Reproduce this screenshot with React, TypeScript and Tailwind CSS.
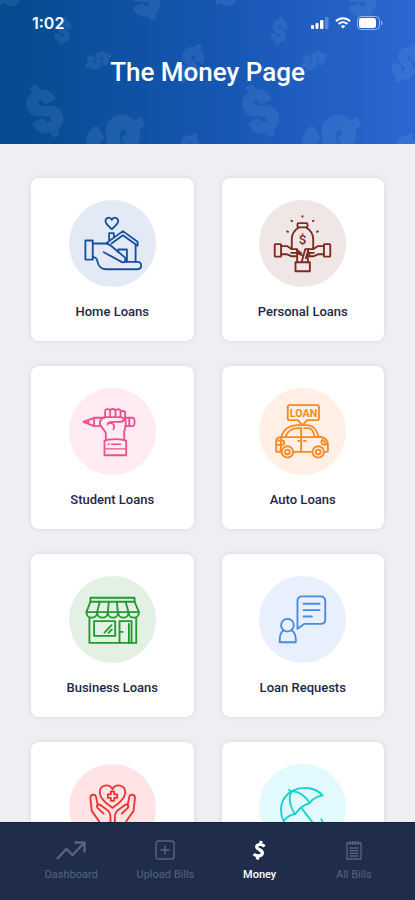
import type { ReactNode } from "react"

type Loan = {
  label: string
  circle: string
  color: string
  viewBox: string
  icon: ReactNode
}

const loans: Loan[] = [
  {
    label: "Home Loans",
    circle: "bg-[#e4eaf5]",
    color: "text-[#17509f]",
    viewBox: "27 30 260 260",
    icon: (
      <>
        <path d="M155 117c-9-8-19-15-19-24 0-11 14-14 19-4 5-10 19-7 19 4 0 9-10 16-19 24z" />
        <path d="M147 148v-19h14v9" />
        <path d="M140 158l48-35 44 32v12l-44-32-34 25" />
        <path d="M226 166v49M174 186v-8h26v37" />
        <rect x="76" y="151" width="22" height="57" />
        <path d="M98 160h39c8 0 12 5 18 9l37 31c8 8 2 20-8 15l-53-29" />
        <path d="M98 200c12 2 12 6 14 14 3 14 12 23 28 23h92c14 0 14-22 0-22h-36" />
      </>
    ),
  },
  {
    label: "Personal Loans",
    circle: "bg-[#efe6e5]",
    color: "text-[#7d2b20]",
    viewBox: "30 30 260 260",
    icon: (
      <>
        <rect x="145" y="99" width="30" height="13" rx="3" />
        <path d="M149 112c-14 8-21 20-21 36v28M171 112c14 8 21 20 21 36v28" />
        <path d="M160 78v2M127 92l2 1M193 92l-2 1M114 124l3 1M206 124l-3 1" />
        <text x="160" y="163" textAnchor="middle" fontSize="40" fontWeight="500" fill="currentColor" stroke="none">
          $
        </text>
        <rect x="77" y="162" width="19" height="37" rx="2" />
        <rect x="224" y="162" width="19" height="37" rx="2" />
        <path d="M96 168h19l13 9h16v11h-18M96 192h16l14 6h16M224 168h-19l-13 9h-15v11h17M224 192h-16l-14 6h-14" />
        <rect x="139" y="216" width="43" height="27" />
        <path d="M144 216v-28l16 8M176 216v-18l6-8M158 214l10-37h10l-8 27M144 180l12 9" />
      </>
    ),
  },
  {
    label: "Student Loans",
    circle: "bg-[#ffebf2]",
    color: "text-[#ee4f88]",
    viewBox: "27 25 260 260",
    icon: (
      <>
        <path d="M133 114h-31l-32 12 32 13h18M102 114v25M85 121v10" />
        <path d="M135 112V95c0-9 15-9 15 0v17M150 94c1-9 16-8 16 1v17M166 94c2-8 15-7 15 1v17M181 98c3-7 14-5 14 2v16" />
        <path d="M195 114h22c8 0 8 25 0 25h-22M207 114v25" />
        <path d="M135 112h47c11 0 11 14 0 14h-26c-6 0-14 4-14 8M135 112c-14 3-17 12-15 23l17 24v19M195 116c3 14 3 25-3 37v25" />
        <path d="M150 129c12 1 14 12 10 19" />
        <path d="M133 183c14-7 51-7 65 0v43h-65z" />
        <path d="M134 207h62M144 193h3M154 193h27" strokeWidth="4" />
      </>
    ),
  },
  {
    label: "Auto Loans",
    circle: "bg-[#ffefe5]",
    color: "text-[#f58a22]",
    viewBox: "31 25 260 260",
    icon: (
      <>
        <path d="M122 76h83c4 0 5 2 5 5v35c0 4-2 5-5 5h-30l-14 16-14-16h-25c-4 0-5-2-5-5V81c0-3 1-5 5-5z" />
        <text x="164" y="112" textAnchor="middle" fontSize="32" fontWeight="700" fill="currentColor" stroke="none">
          LOAN
        </text>
        <path d="M97 172c7-22 24-36 51-36h27c18 0 29 16 34 34 16 2 28 8 28 24v18c0 3-2 4-5 4h-7M189 216h-53M96 216h-9c-4 0-5-2-5-6v-25c0-8 6-13 15-13z" />
        <path d="M97 172h112M110 170c7-16 20-25 37-25h10v68M166 145h11c10 0 17 10 20 24M148 183h6M165 183h6" />
        <circle cx="116" cy="216" r="17" />
        <circle cx="116" cy="216" r="7" />
        <circle cx="208" cy="216" r="17" />
        <circle cx="208" cy="216" r="7" />
        <path d="M88 182h12c8 0 8 13 0 13H84M220 180c7 3 10 7 12 14h-9c-7-3-7-9-3-14" />
      </>
    ),
  },
  {
    label: "Business Loans",
    circle: "bg-[#e3f1e5]",
    color: "text-[#229a2e]",
    viewBox: "27 20 260 260",
    icon: (
      <>
        <rect x="91" y="85" width="132" height="12" />
        <path d="M91 97L79 128h157l-13-31M119 97l-8 31M146 97l-3 31M170 97l3 31M196 97l9 31" />
        <path d="M79 128c0 22 32 22 32 0 0 22 32 22 32 0 0 22 31 22 31 0 0 22 31 22 31 0 0 22 31 22 31 0" />
        <path d="M88 145v75h140v-75" />
        <rect x="102" y="155" width="63" height="44" />
        <path d="M178 220v-65h36v65M206 220v-57M180 187h7" />
        <path d="M133 189l21-22M145 190l10-10" />
      </>
    ),
  },
  {
    label: "Loan Requests",
    circle: "bg-[#e8effd]",
    color: "text-[#478bdc]",
    viewBox: "30 20 260 260",
    icon: (
      <>
        <path d="M145 178V95c0-9 5-14 14-14h55c9 0 14 5 14 14v54c0 9-5 14-14 14h-48z" />
        <path d="M163 103h48M163 122h48M163 141h25" />
        <circle cx="115" cy="167" r="19" />
        <path d="M103 183c-9 5-12 17-11 35h48c1-18-3-30-12-35" />
      </>
    ),
  },
  {
    label: "Health Insurance",
    circle: "bg-[#ffe3e5]",
    color: "text-[#ea3432]",
    viewBox: "147 105 260 260",
    icon: (
      <>
        <path d="M277 236c-19-14-38-28-38-47 0-22 28-27 38-9 10-18 38-13 38 9 0 19-19 33-38 47z" />
        <path d="M272 187h10v9h9v10h-9v9h-10v-9h-9v-10h9z" />
        <path d="M271 290v-27c0-12-4-17-12-22l-17-13c-9-5-15 2-9 9l17 16M233 229l-5-25c-3-12-18-8-17 3l4 38 22 31v14" />
        <path d="M284 290v-27c0-12 4-17 12-22l17-13c9-5 15 2 9 9l-17 16M322 229l5-25c3-12 18-8 17 3l-4 38-22 31v14" />
      </>
    ),
  },
  {
    label: "Insurance",
    circle: "bg-[#e2f9fd]",
    color: "text-[#17d0cf]",
    viewBox: "150 105 260 260",
    icon: (
      <>
        <path d="M240 182l6 8M224 277c-17-36-7-73 24-91 34-18 73-9 92 13-14 2-29 9-39 23-16 5-32 16-43 33-17 2-28 11-34 22z" />
        <path d="M247 187c-10 20-4 49 11 68M247 187c20-2 42 13 54 35" />
        <path d="M278 238l36 47c9 12 36 8 27-5l-5-10" />
      </>
    ),
  },
]

const tabs = [
  {
    label: "Dashboard",
    icon: (
      <svg viewBox="0 0 30 20" className="h-5 w-[30px]" fill="none" stroke="currentColor" strokeWidth="2.4">
        <path d="M1 19l9.500-10 6 6L28 3M18.500 2.500h10v10" />
      </svg>
    ),
  },
  {
    label: "Upload Bills",
    icon: (
      <svg viewBox="0 0 20 20" className="size-5" fill="none" stroke="currentColor" strokeWidth="1.400">
        <rect x="1" y="1" width="18" height="18" rx="2.500" />
        <path d="M10 5.500v9M5.500 10h9" />
      </svg>
    ),
  },
  {
    label: "Money",
    active: true,
    icon: (
      <svg viewBox="0 0 20 20" className="size-5" fill="none" stroke="currentColor" strokeWidth="3.200">
        <path d="M14.500 6.500C13 4.500 8 3.300 6.700 6.300 5.500 9.500 13.300 9.500 12.300 13.500 11.300 17 5.500 16 3.800 14M11.300 1l-1 3.500M8.200 16l-1 3.500" />
      </svg>
    ),
  },
  {
    label: "All Bills",
    icon: (
      <svg viewBox="0 0 20 20" className="size-5" fill="none" stroke="currentColor" strokeWidth="1.300">
        <path d="M3 3h14v16H3zM6 1v4M8.700 1v4M11.300 1v4M14 1v4M5.500 8h9M5.500 10.700h9M5.500 13.400h9M5.500 16h9" />
      </svg>
    ),
  },
]

// One tile of the header pattern: centre, size and tilt of every dollar sign
const dollars = [
  { x: 16, y: -8, size: 40, tilt: 60 },
  { x: 143, y: -3, size: 50, tilt: -25 },
  { x: 63, y: 31, size: 28, tilt: 8 },
  { x: 98, y: 60, size: 28, tilt: 65 },
  { x: 190, y: 63, size: 42, tilt: 25 },
  { x: 44, y: 111, size: 56, tilt: -25 },
  { x: 113, y: 138, size: 70, tilt: 58 },
  { x: 187, y: 148, size: 34, tilt: 30 },
]

function HeaderPattern() {
  return (
    <svg className="absolute inset-0 size-full" aria-hidden="true">
      <defs>
        <pattern id="dollars" width="216" height="160" patternUnits="userSpaceOnUse">
          <g fill="#7fb0e6" stroke="#7fb0e6" strokeLinejoin="round" fontWeight="900" textAnchor="middle" opacity="0.14">
            {dollars.map((d) => (
              <text
                key={`${d.x}-${d.y}`}
                transform={`translate(${d.x} ${d.y}) rotate(${d.tilt})`}
                y={d.size * 0.36}
                fontSize={d.size}
                strokeWidth={d.size * 0.06}
              >
                $
              </text>
            ))}
          </g>
        </pattern>
      </defs>
      <rect width="100%" height="100%" fill="url(#dollars)" />
    </svg>
  )
}

function StatusBar() {
  return (
    <div className="flex items-center justify-between px-8">
      <span className="font-['Inter',sans-serif] text-base leading-5 font-semibold">1:02</span>
      <div className="flex items-center gap-1.5">
        <svg viewBox="0 0 18 12" className="h-3 w-[18px]" fill="currentColor" aria-hidden="true">
          <rect x="0" y="8" width="3" height="4" rx="1" />
          <rect x="4.500" y="6" width="3" height="6" rx="1" />
          <rect x="9" y="3" width="3.500" height="9" rx="1" />
          <rect x="14" y="0" width="3.500" height="12" rx="1" opacity="0.25" />
        </svg>
        <svg viewBox="0 0 16 12" className="h-3 w-4" fill="none" stroke="currentColor" strokeWidth="2" aria-hidden="true">
          <path d="M1 4.200c4-4 10-4 14 0M3.600 7c2.600-2.500 6.200-2.500 8.800 0" />
          <path d="M8 11.500L5.700 9.200c1.300-1.200 3.300-1.200 4.600 0z" fill="currentColor" stroke="none" />
        </svg>
        <svg viewBox="0 0 26 14" className="h-3.5 w-[26px]" aria-hidden="true">
          <rect x="0.500" y="0.500" width="22" height="13" rx="4" fill="none" stroke="currentColor" opacity="0.5" />
          <rect x="2" y="2" width="17" height="10" rx="2.500" fill="currentColor" />
          <path d="M24 4.500v5c2-1 2-4 0-5z" fill="currentColor" opacity="0.5" />
        </svg>
      </div>
    </div>
  )
}

function LoanCard({ label, circle, color, viewBox, icon }: Loan) {
  return (
    <a
      href="#"
      className="flex h-[163px] flex-col items-center rounded-lg bg-white pt-[22px] shadow-[0_0_5px_rgba(30,40,80,0.12)]"
    >
      <span className={`size-[87px] rounded-full ${circle} ${color}`}>
        <svg
          viewBox={viewBox}
          className="size-full"
          fill="none"
          stroke="currentColor"
          strokeWidth="5.5"
          strokeLinecap="round"
          strokeLinejoin="round"
          aria-hidden="true"
        >
          {icon}
        </svg>
      </span>
      <span className="mt-[17px] text-[13px] leading-4 font-medium text-[#1d2747]">{label}</span>
    </a>
  )
}

export default function App() {
  return (
    <div className="flex h-dvh flex-col bg-[#edeff3] font-['Roboto',sans-serif]">
      <header className="relative h-36 shrink-0 overflow-hidden bg-linear-to-r from-[#034b8d] via-[#1556b1] to-[#2b67d1] text-white">
        <HeaderPattern />
        <div className="relative pt-[13px]">
          <StatusBar />
          <h1 className="mt-[23px] text-center text-[26px] leading-8 font-medium">The Money Page</h1>
        </div>
      </header>

      <main className="min-h-0 flex-1 overflow-y-auto [scrollbar-width:none]">
        <div className="grid grid-cols-2 gap-x-7 gap-y-[25px] px-[31px] py-[34px]">
          {loans.map((loan) => (
            <LoanCard key={loan.label} {...loan} />
          ))}
        </div>
      </main>

      <nav className="grid h-[78px] shrink-0 grid-cols-4 border-t border-[#14203f] bg-[#1f2d4b] pr-3.5 pl-6">
        {tabs.map((tab) => (
          <button
            key={tab.label}
            type="button"
            className={`flex flex-col items-center gap-2 pt-[17px] text-[11px] leading-3.5 ${
              tab.active ? "font-medium text-white" : "text-[#56647e]"
            }`}
          >
            {tab.icon}
            {tab.label}
          </button>
        ))}
      </nav>
    </div>
  )
}
